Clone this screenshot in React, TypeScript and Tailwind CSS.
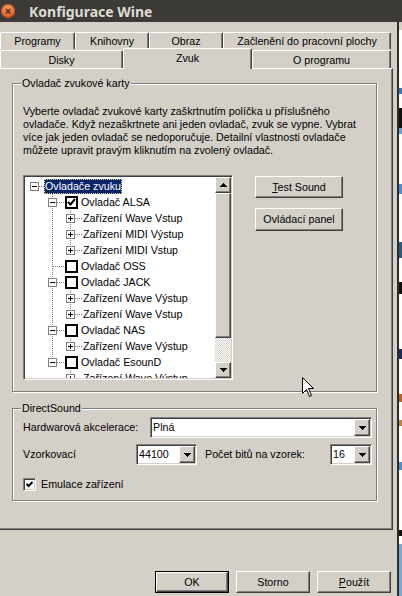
import React from "react";

// classic win95 bevels
const raised =
  "border border-t-white border-l-white border-r-[#404040] border-b-[#404040] shadow-[inset_-1px_-1px_0_#808080]";
const sunken =
  "border border-t-[#808080] border-l-[#808080] border-r-white border-b-white shadow-[inset_1px_1px_0_#404040,inset_-1px_-1px_0_#d4d0c8]";
const etched = "border border-[#808080] shadow-[inset_1px_1px_0_#fff,1px_1px_0_#fff]";
const tab =
  "flex items-center justify-center border-t border-l border-r border-t-white border-l-white border-r-[#404040] shadow-[inset_-1px_0_0_#808080] rounded-t-[2px] bg-[#d4d0c8]";

type Row = {
  level: 0 | 1 | 2;
  label: string;
  exp?: "minus" | "plus";
  check?: boolean;
  last?: boolean;
  guide?: boolean;
  selected?: boolean;
};

const rows: Row[] = [
  { level: 0, label: "Ovladače zvuku", exp: "minus", selected: true },
  { level: 1, label: "Ovladač ALSA", exp: "minus", check: true },
  { level: 2, label: "Zařízení Wave Vstup", exp: "plus", guide: true },
  { level: 2, label: "Zařízení MIDI Výstup", exp: "plus", guide: true },
  { level: 2, label: "Zařízení MIDI Vstup", exp: "plus", guide: true, last: true },
  { level: 1, label: "Ovladač OSS", check: false },
  { level: 1, label: "Ovladač JACK", exp: "minus", check: false },
  { level: 2, label: "Zařízení Wave Výstup", exp: "plus", guide: true },
  { level: 2, label: "Zařízení Wave Vstup", exp: "plus", guide: true, last: true },
  { level: 1, label: "Ovladač NAS", exp: "minus", check: false },
  { level: 2, label: "Zařízení Wave Výstup", exp: "plus", guide: true, last: true },
  { level: 1, label: "Ovladač EsounD", exp: "minus", check: false, last: true },
  { level: 2, label: "Zařízení Wave Výstup", exp: "plus", guide: false, last: true },
];

function Guide({ on }: { on?: boolean }) {
  return (
    <svg width={18} height={16} className="shrink-0" shapeRendering="crispEdges">
      {on && <line x1={4.5} y1={0} x2={4.5} y2={16} stroke="#808080" strokeDasharray="1 1" />}
    </svg>
  );
}

function NodeCell({ w, exp, line }: { w: number; exp?: "minus" | "plus"; line: "none" | "top" | "full" }) {
  return (
    <svg width={w} height={16} className="shrink-0" shapeRendering="crispEdges">
      {line !== "none" && (
        <line x1={4.5} y1={0} x2={4.5} y2={line === "top" ? 9 : 16} stroke="#808080" strokeDasharray="1 1" />
      )}
      <line x1={5} y1={8.5} x2={w} y2={8.5} stroke="#808080" strokeDasharray="1 1" />
      {exp && (
        <>
          <rect x={0.5} y={4.5} width={8} height={8} fill="#fff" stroke="#808080" />
          <line x1={2} y1={8.5} x2={7} y2={8.5} stroke="#000" />
          {exp === "plus" && <line x1={4.5} y1={6} x2={4.5} y2={11} stroke="#000" />}
        </>
      )}
    </svg>
  );
}

function TreeCheck({ checked }: { checked?: boolean }) {
  return (
    <svg width={13} height={13} className="mr-[3px] shrink-0" shapeRendering="crispEdges">
      <rect x={1} y={1} width={11} height={11} fill="#fff" stroke="#000" strokeWidth={2} />
      {checked && (
        <polyline points="3,6 5.5,8.5 10,3" fill="none" stroke="#000" strokeWidth={2} shapeRendering="auto" />
      )}
    </svg>
  );
}

function Tri({ up }: { up?: boolean }) {
  return (
    <svg width={7} height={4} shapeRendering="crispEdges">
      <path d={up ? "M3.5 0 L7 4 L0 4 Z" : "M0 0 L7 0 L3.5 4 Z"} fill="#000" />
    </svg>
  );
}

function Combo({ value, className }: { value: string; className: string }) {
  return (
    <div className={`${sunken} ${className} flex h-[21px] bg-white p-[1px]`}>
      <span className="flex-1 pl-[1px] leading-[17px]">{value}</span>
      <span className={`${raised} flex h-[17px] w-4 items-center justify-center bg-[#d4d0c8]`}>
        <Tri />
      </span>
    </div>
  );
}

function Btn({ children, className }: { children: React.ReactNode; className: string }) {
  return (
    <div className={`${raised} ${className} flex items-center justify-center bg-[#d4d0c8]`}>{children}</div>
  );
}

export default function App() {
  return (
    <div className="relative flex h-[596px] w-[402px] flex-col overflow-hidden bg-[#d4d0c8] font-['Liberation_Sans',Arial,sans-serif] text-[10.7px] leading-[13px] text-black">
      {/* title bar */}
      <div className="flex h-[22px] shrink-0 items-center bg-[#3c3b37]">
        <div className="ml-[1px] flex h-[14px] w-[14px] items-center justify-center rounded-full bg-gradient-to-b from-[#f59a6c] to-[#e05a22] shadow-[inset_0_0_0_1px_#b4491c]">
          <span className="text-[11px] font-bold leading-none text-[#4a2a1a]">×</span>
        </div>
        <span className="ml-[14px] font-['Noto_Sans',sans-serif] text-[14px] font-bold text-[#dfdbd2]">
          Konfigurace Wine
        </span>
      </div>

      <div className="flex flex-1">
        {/* dialog body */}
        <div className="flex w-[397px] flex-col">
          <div className="mt-[10px] flex h-[17px]">
            <div className={`${tab} h-[17px] w-[75px]`}>Programy</div>
            <div className={`${tab} h-[17px] w-[74px]`}>Knihovny</div>
            <div className={`${tab} h-[17px] w-[74px]`}>Obraz</div>
            <div className={`${tab} h-[17px] w-[168px]`}>Začlenění do pracovní plochy</div>
          </div>
          <div className="flex h-[19px] items-start">
            <div className={`${tab} mt-[1px] h-[18px] w-[123px] pt-[1px]`}>Disky</div>
            <div className={`${tab} relative z-10 -mt-[1px] h-[21px] w-[129px] pb-[2px]`}>Zvuk</div>
            <div className={`${tab} mt-[1px] h-[18px] w-[139px] pt-[1px]`}>O programu</div>
          </div>

          {/* tab panel */}
          <div className="h-[462px] w-[393px] border-t border-r border-b border-t-white border-r-[#404040] border-b-[#404040] shadow-[inset_-1px_-1px_0_#808080]">
            <div className={`relative ml-[12px] mt-[14px] h-[309px] w-[365px] ${etched} pl-[10px] pt-[21px]`}>
              <span className="absolute -top-[7px] left-[8px] bg-[#d4d0c8] px-[1px]">Ovladač zvukové karty</span>
              <p className="whitespace-nowrap">
                Vyberte ovladač zvukové karty zaškrtnutím políčka u příslušného
                <br />
                ovladače. Když nezaškrtnete ani jeden ovladač, zvuk se vypne. Vybrat
                <br />
                více jak jeden ovladač se nedoporučuje. Detailní vlastnosti ovladače
                <br />
                můžete upravit pravým kliknutím na zvolený ovladač.
              </p>
              <div className="mt-[18px] flex items-start">
                <div className={`${sunken} flex h-[205px] w-[210px] bg-white p-[1px]`}>
                  <div className="flex-1 overflow-hidden pt-[1px]">
                    {rows.map((r, i) => (
                      <div key={i} className="flex h-4 items-center whitespace-nowrap pl-[5px]">
                        {r.level >= 1 && <Guide />}
                        {r.level === 2 && <Guide on={r.guide} />}
                        <NodeCell
                          w={r.level === 0 ? 14 : 17}
                          exp={r.exp}
                          line={r.level === 0 ? "none" : r.last ? "top" : "full"}
                        />
                        {r.check !== undefined && <TreeCheck checked={r.check} />}
                        {r.selected ? (
                          <span className="bg-[#0a246a] px-[1px] leading-[15px] text-white outline outline-1 -outline-offset-1 outline-dotted outline-[#d8d890]">
                            {r.label}
                          </span>
                        ) : (
                          <span>{r.label}</span>
                        )}
                      </div>
                    ))}
                  </div>
                  <div className="flex w-4 flex-col">
                    <div className={`${raised} flex h-4 items-center justify-center bg-[#d4d0c8]`}>
                      <Tri up />
                    </div>
                    <div className={`${raised} h-[145px] bg-[#d4d0c8]`} />
                    <div className="flex-1 bg-[repeating-conic-gradient(#fff_0_25%,#d4d0c8_0_50%)] bg-[length:2px_2px]" />
                    <div className={`${raised} flex h-4 items-center justify-center bg-[#d4d0c8]`}>
                      <Tri />
                    </div>
                  </div>
                </div>
                <div className="ml-[22px] mt-[1px] flex flex-col gap-[10px]">
                  <Btn className="h-[22px] w-[88px]">
                    <span>
                      <span className="underline">T</span>est Sound
                    </span>
                  </Btn>
                  <Btn className="h-[23px] w-[88px]">Ovládací panel</Btn>
                </div>
              </div>
            </div>

            <div className={`relative ml-[12px] mt-[16px] h-[93px] w-[365px] ${etched} pl-[10px] pt-[8px]`}>
              <span className="absolute -top-[7px] left-[8px] bg-[#d4d0c8] px-[1px]">DirectSound</span>
              <div className="flex h-[21px] items-center">
                <span className="w-[127px]">Hardwarová akcelerace:</span>
                <Combo value="Plná" className="w-[222px]" />
              </div>
              <div className="mt-[6px] flex h-[21px] items-center">
                <span className="w-[113px]">Vzorkovací</span>
                <Combo value="44100" className="w-[61px]" />
                <span className="ml-[8px] w-[125px]">Počet bitů na vzorek:</span>
                <Combo value="16" className="w-[42px]" />
              </div>
              <div className="mt-[11px] flex h-4 items-center">
                <span className={`${sunken} flex h-[13px] w-[13px] items-center justify-center bg-white`}>
                  <svg width={7} height={7}>
                    <polyline points="0.5,3 2.5,5 6.5,1" fill="none" stroke="#000" strokeWidth={2} />
                  </svg>
                </span>
                <span className="ml-[5px]">Emulace zařízení</span>
              </div>
            </div>
          </div>

          <div className="mt-[41px] flex justify-end gap-[7px] pr-[6px]">
            <div className="h-[22px] w-[74px] border border-black">
              <Btn className="h-full w-full">OK</Btn>
            </div>
            <Btn className="h-[22px] w-[74px]">Storno</Btn>
            <Btn className="h-[22px] w-[74px]">
              <span>
                <span className="underline">P</span>oužít
              </span>
            </Btn>
          </div>
        </div>

        {/* window edge and what lies behind it */}
        <div className="w-[2px] bg-[#2e2d2a]" />
        <div className="flex w-[3px] flex-col bg-white">
          <div className="h-[8px] bg-[#d4d0c8]" />
          <div className="h-[58px]" />
          <div className="h-[6px] bg-[#3a78c0]" />
          <div className="h-[14px]" />
          <div className="h-[20px] bg-[#101010]" />
          <div className="h-[6px] bg-[#6aa0d8]" />
          <div className="h-[50px]" />
          <div className="h-[10px] bg-[#4a90d0]" />
          <div className="h-[48px]" />
          <div className="h-[16px] bg-[#2a5a80]" />
          <div className="h-[24px]" />
          <div className="h-[12px] bg-[#101010]" />
          <div className="h-[55px]" />
          <div className="h-[10px] bg-[#1a2a60]" />
          <div className="h-[35px]" />
          <div className="h-[8px] bg-[#c06020]" />
          <div className="h-[18px]" />
          <div className="h-[6px] bg-[#c08040]" />
          <div className="h-[36px]" />
          <div className="h-[8px] bg-[#4a90d0]" />
          <div className="h-[60px]" />
          <div className="h-[6px] bg-[#101010]" />
          <div className="h-[8px]" />
          <div className="flex-1 bg-[#7aa8d8]" />
        </div>
      </div>

      {/* mouse pointer */}
      <svg width={13} height={21} className="pointer-events-none absolute left-[302px] top-[377px]">
        <path
          d="M0.5 0.5 L0.5 16.5 L4.5 12.5 L7.5 19.5 L9.5 18.5 L6.5 11.5 L11.5 11.5 Z"
          fill="#fff"
          stroke="#000"
          strokeLinejoin="round"
        />
      </svg>
    </div>
  );
}
